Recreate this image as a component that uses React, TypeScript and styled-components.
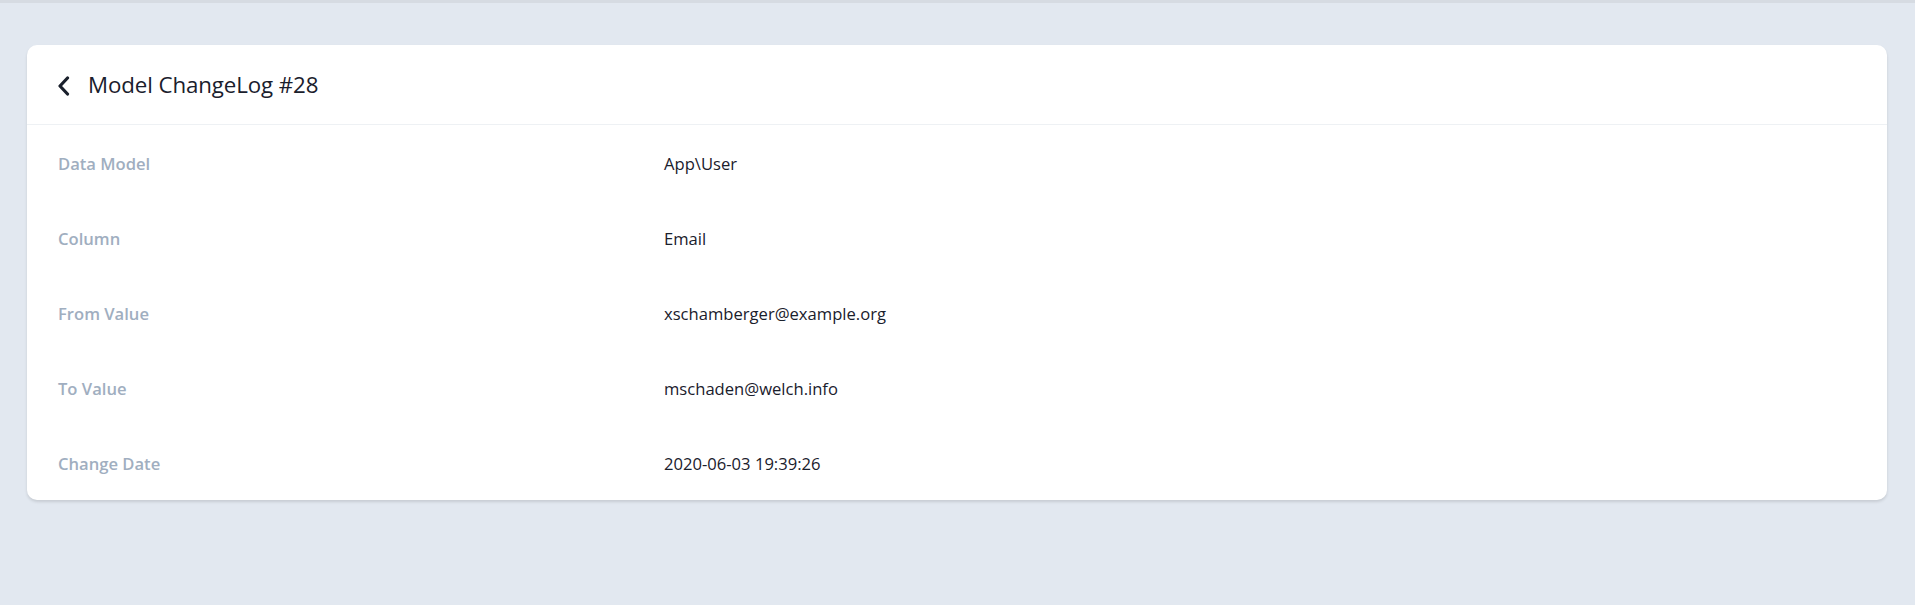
import React from "react";
import styled, { createGlobalStyle } from "styled-components";

const Global = createGlobalStyle`
  html, body { margin: 0; padding: 0; }
  body {
    background: #e2e8f0;
    font-family: "Open Sans", "Noto Sans", "Liberation Sans", sans-serif;
    -webkit-font-smoothing: antialiased;
  }
`;

const Page = styled.div`
  min-height: 605px;
  box-sizing: border-box;
  border-top: 3px solid #d6dbe2;
  padding: 42px 28px 40px 27px;
`;

const Card = styled.div`
  background: #ffffff;
  border-radius: 10px;
  box-shadow: 0 2px 3px 0 rgba(0, 0, 0, 0.12);
  overflow: hidden;
`;

const Header = styled.div`
  height: 80px;
  box-sizing: border-box;
  display: flex;
  align-items: center;
  gap: 17px;
  padding: 0 30px;
  border-bottom: 1px solid #eef1f4;
`;

const BackButton = styled.a`
  display: flex;
  align-items: center;
  color: #1a202c;
  cursor: pointer;
  margin-top: 2px;
`;

const Title = styled.h1`
  margin: 0;
  font-size: 22.3px;
  font-weight: 500;
  color: #1a202c;
  letter-spacing: -0.1px;
`;

const Row = styled.div`
  display: grid;
  grid-template-columns: 606px 1fr;
  align-items: center;
  height: 75px;
  box-sizing: border-box;
  padding: 2px 31px 0;
`;

const Label = styled.div`
  font-size: 16.6px;
  font-weight: 600;
  color: #a0aec0;
`;

const Value = styled.div`
  font-size: 16.6px;
  font-weight: 400;
  color: #1a202c;
`;

const rows: [string, string][] = [
  ["Data Model", "App\\User"],
  ["Column", "Email"],
  ["From Value", "xschamberger@example.org"],
  ["To Value", "mschaden@welch.info"],
  ["Change Date", "2020-06-03 19:39:26"],
];

export default function App() {
  return (
    <>
      <Global />
      <Page>
        <Card>
          <Header>
            <BackButton aria-label="Back">
              <svg width="14" height="20" viewBox="0 0 14 20" fill="none">
                <polyline
                  points="10.5,2 3,10 10.5,18"
                  stroke="currentColor"
                  strokeWidth="3.2"
                  strokeLinecap="round"
                  strokeLinejoin="round"
                />
              </svg>
            </BackButton>
            <Title>Model ChangeLog #28</Title>
          </Header>
          {rows.map(([label, value]) => (
            <Row key={label}>
              <Label>{label}</Label>
              <Value>{value}</Value>
            </Row>
          ))}
        </Card>
      </Page>
    </>
  );
}
